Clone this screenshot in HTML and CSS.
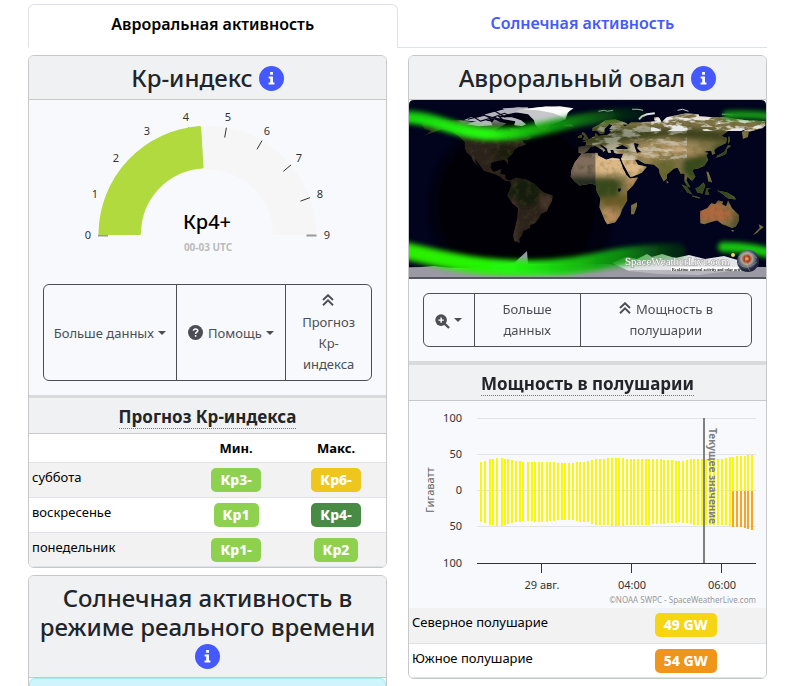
FILE: index.html
```html
<!DOCTYPE html>
<html lang="ru">
<head>
<meta charset="utf-8">
<meta name="viewport" content="width=device-width, initial-scale=1">
<title>SpaceWeatherLive</title>
<link rel="stylesheet" href="styles.css">
</head>
<body>
<svg class="defs" aria-hidden="true">
  <symbol id="info" viewBox="0 0 512 512"><circle cx="256" cy="256" r="256" fill="#4459ff"/><path fill="#fff" d="M228 124h58v54h-58zM198 216h88v124h30v40H196v-40h34v-84h-32z"/></symbol>
  <symbol id="up" viewBox="0 0 12 12"><path d="M1 6 6 1.2 11 6M1 11.2 6 6.4 11 11.2" fill="none" stroke="currentColor" stroke-width="1.9"/></symbol>
</svg>
<main class="page">
  <nav class="tabs">
    <a class="tab active" href="#aurora">Авроральная активность</a>
    <a class="tab" href="#solar">Солнечная активность</a>
  </nav>
  <div class="columns">
    <div class="column">
      <section class="card">
        <h2 class="card-title">Кр-индекс <svg class="info"><use href="#info"/></svg></h2>
        <svg class="gauge" viewBox="0 0 357 170">
          <path fill="#f6f6f6" d="M69.500 135a109 109 0 0 1 218 0h-43.500a65.500 65.500 0 0 0-131 0z"/>
          <g stroke="#333" stroke-width="1">
            <path d="M69 135.500h10M277.500 135.500h10" stroke="#999" stroke-width="2"/>
            <path d="M159.600 27.700l.6 4M197.400 27.700l-1.700 9.800M233 40.600l-5 8.700M262 64.900l-7.700 6.500M280.900 97.700l-9.400 3.400"/>
          </g>
          <path fill="#b0da3e" stroke="#b0da3e" stroke-width="3" stroke-linejoin="round" d="M71 133.500A107.500 107.500 0 0 1 170.700 27.500L173 67A67 67 0 0 0 110.500 133.500z"/>
          <g class="gauge-labels">
            <text x="59" y="139">0</text><text x="66" y="98">1</text><text x="87" y="62">2</text><text x="118" y="35">3</text><text x="157" y="21">4</text><text x="199" y="21">5</text><text x="238" y="35">6</text><text x="270" y="62">7</text><text x="291" y="98">8</text><text x="298" y="139">9</text>
          </g>
          <text class="gauge-value" x="178" y="129">Кр4+</text>
          <text class="gauge-time" x="179" y="151">00-03 UTC</text>
        </svg>
        <div class="actions left">
          <button class="btn tight">Больше данных<span class="caret"></span></button>
          <button class="btn tight"><svg class="icon help" viewBox="0 0 16 16"><circle cx="8" cy="8" r="8" fill="currentColor"/><path d="M5.800 6.200C6 3.500 10.400 3.700 10.400 6.200 10.400 7.800 8.100 7.600 8.100 9.500M8.100 10.700v1.700" fill="none" stroke="#fff" stroke-width="1.600"/></svg>Помощь<span class="caret"></span></button>
          <button class="btn"><svg class="icon up"><use href="#up"/></svg> Прогноз Кр-индекса</button>
        </div>
        <h3 class="sub-title"><abbr>Прогноз Кр-индекса</abbr></h3>
        <table class="table forecast">
          <thead><tr><th></th><th>Мин.</th><th>Макс.</th></tr></thead>
          <tbody>
            <tr><td>суббота</td><td><span class="badge light">Кр3-</span></td><td><span class="badge gold">Кр6-</span></td></tr>
            <tr><td>воскресенье</td><td><span class="badge light">Кр1</span></td><td><span class="badge dark">Кр4-</span></td></tr>
            <tr><td>понедельник</td><td><span class="badge light">Кр1-</span></td><td><span class="badge light">Кр2</span></td></tr>
          </tbody>
        </table>
      </section>
      <section class="card">
        <h2 class="card-title">Солнечная активность в режиме реального времени <svg class="info"><use href="#info"/></svg></h2>
        <div class="notice"></div>
      </section>
    </div>
    <div class="column">
      <section class="card">
        <h2 class="card-title">Авроральный овал <svg class="info"><use href="#info"/></svg></h2>
        <svg class="map" viewBox="0 0 357 179" preserveAspectRatio="none">
          <defs>
            <filter id="b1" x="-30%" y="-60%" width="160%" height="220%"><feGaussianBlur stdDeviation="1"/></filter>
            <filter id="b3" x="-30%" y="-60%" width="160%" height="220%"><feGaussianBlur stdDeviation="2.500"/></filter>
            <filter id="grain" x="0" y="0" width="100%" height="100%"><feTurbulence type="fractalNoise" baseFrequency=".16" numOctaves="4" seed="4"/><feColorMatrix values="0 0 0 0 .1  0 0 0 0 .1  0 0 0 0 .02  2.200 0 0 0 -1.050"/></filter>
            <filter id="snow" x="0" y="0" width="100%" height="100%"><feTurbulence type="fractalNoise" baseFrequency=".06 .16" numOctaves="4" seed="8"/><feColorMatrix values="0 0 0 0 .88  0 0 0 0 .88  0 0 0 0 .88  6 0 0 0 -2.700"/></filter>
            <linearGradient id="north" x1="0" x2="1"><stop offset="0" stop-color="#13d80a"/><stop offset=".4" stop-color="#24ff08"/><stop offset=".65" stop-color="#13a510"/><stop offset="1" stop-color="#0a5a0a" stop-opacity=".3"/></linearGradient>
            <linearGradient id="south" x1="0" x2="1"><stop offset="0" stop-color="#2df000"/><stop offset=".5" stop-color="#20f808"/><stop offset=".8" stop-color="#14b812"/><stop offset="1" stop-color="#0a700a" stop-opacity=".4"/></linearGradient>
            <radialGradient id="ball" cx=".45" cy=".4"><stop offset="0" stop-color="#e8d060"/><stop offset=".25" stop-color="#a83020"/><stop offset=".5" stop-color="#b0a890"/><stop offset=".8" stop-color="#4c5578"/><stop offset="1" stop-color="#20243c"/></radialGradient>
            <path id="america" d="M-168-66-162-70-156-71-141-70-128-70-115-68-108-68-96-68-94-71-88-68-82-67-87-64-94-60-92-57-82-55-80-51-78-54-77-58-78-62-70-61-65-58-60-55-56-52-60-50-66-50-64-47-61-46-66-44-70-43-74-40-76-36-81-31-80-25-82-28-84-30-90-29-97-27-98-22-95-18-91-19-87-21-88-16-83-15-83-11-79-9-76-10-72-12-68-11-62-10-54-6-50-2-44 3-35 6-36 12-39 17-41 22-47 25-49 29-53 34-58 36-58 39-65 42-66 46-69 50-68 54-74 52-75 46-73 38-71 30-70 19-76 14-81 6-79 1-77-4-78-8-84-9-88-13-95-16-105-19-109-25-114-31-113-28-110-23-115-28-118-34-122-37-124-42-124-48-130-54-138-59-147-61-152-59-158-57-165-54-158-59-165-61-166-64z"/>
            <path id="eurasia" d="M-9-37-9-43-2-44-1-48-5-48 2-51 8-54 8-57 11-54 20-55 24-58 22-60 28-60 22-61 25-65 22-66 17-61 17-57 13-56 10-59 5-59 5-62 12-66 18-70 28-71 40-67 41-65 35-66 38-64 44-68 54-68 68-69 67-73 72-73 75-68 80-73 100-77 112-76 113-74 128-73 140-73 160-70 180-69 180-65 177-62 170-60 163-58 162-53 157-51 156-58 163-62 155-59 142-59 135-54 141-52 140-47 132-43 128-40 129-36 126-35 125-39 121-39 118-38 122-37 120-34 122-30 118-24 111-21 108-21 106-19 109-13 106-9 105-9 101-13 100-9 104-2 101-3 98-8 98-16 94-16 91-22 87-21 80-15 80-11 77-8 73-16 72-21 67-25 58-26 56-27 51-30 48-30 51-25 56-24 60-23 55-17 45-13 43-13 39-20 35-28 34-31 36-36 30-36 27-37 26-40 23-40 24-37 21-37 19-42 13-46 13-44 18-40 16-38 15-40 8-44 3-43 0-39-5-36z"/>
            <path id="africa" d="M-6-36 10-37 11-34 19-30 25-32 32-31 36-22 39-15 43-11 51-12 46-4 40 2 40 11 35 20 33 26 28 33 20 35 18 32 12 18 13 9 9 1 9-4 4-6-8-4-13-8-17-13-16-20-13-27z"/>
            <path id="australia" d="M114 22 114 34 118 35 124 33 131 31 136 35 139 36 146 39 150 37 153 31 153 26 146 19 142 11 140 17 136 15 137 12 132 11 129 15 125 14 121 19z"/>
            <path id="islands" d="M44 25 44 16 50 13 50 17 47 25zM-5-50 1-51-2-56-5-58-6-56-3-54zM-10-52-6-52-6-55-9-54zM-24-64-14-64-16-66-23-66zM130-32 136-34 140-36 141-41 145-44 142-45 138-38 131-34zM142-46 144-49 143-54 142-52zM95-5 100-3 106 5 101 3zM106 6 114 8 113 9 106 7zM109-1 113-3 117-7 119-4 116 4 111 3zM119 5 120-1 125-1 121 0 123 5zM131 1 141 3 148 7 150 10 142 9 137 5zM120-18 122-18 124-13 126-7 122-8 121-14zM173 35 178 38 174 41 171 44 167 46 172 41 174 39zM145 41 148 41 147 43zM80-9 82-7 80-6z"/>
            <clipPath id="land"><use href="#eurasia"/><use href="#africa"/><use href="#australia"/><use href="#islands"/></clipPath>
            <clipPath id="west"><use href="#america"/></clipPath>
            <clipPath id="frame"><path d="M0 179V5Q0 0 5 0H352Q357 0 357 5V179z"/></clipPath>
          </defs>
          <g clip-path="url(#frame)">
            <path fill="#02031d" d="M0 0h357v179H0z"/>
            <ellipse cx="112" cy="108" rx="92" ry="96" fill="#000" opacity=".45" filter="url(#b3)"/>
            <ellipse cx="108" cy="106" rx="78" ry="84" fill="#000" opacity=".6"/>
            <g transform="translate(178.500 89.500) scale(.99)">
              <g clip-path="url(#west)">
                <path fill="#2b221c" d="M-180-90H-30V60H-180z"/>
                <g filter="url(#b3)"><ellipse cx="-62" cy="3" rx="17" ry="14" fill="#131a0b"/><ellipse cx="-82" cy="-36" rx="12" ry="9" fill="#1c1c10"/><ellipse cx="-115" cy="-59" rx="45" ry="7" fill="#2f4520"/><path fill="#8d8d94" d="M-130-90h80v23h-80z"/><path fill="#44332a" d="M-78 10h6v44h-6zM-48 6h12v14h-12z"/></g>
                <path filter="url(#grain)" opacity=".4" d="M-180-90H-30V60H-180z"/>
              </g>
              <path fill="#b4b4be" d="M-125-70-118-73-110-73-103-76-92-79-84-81-70-83-60-82-66-79-76-77-84-75-91-74-88-72-96-72-104-69-115-69zM-88-73-76-73-67-70-62-66-66-64-74-65-73-69-85-71z"/>
              <path fill="#b4b4be" d="M-122-66-110-70-98-69-96-65-110-64zM-86-82-60-83-62-79-80-78z"/>
              <path fill="#c8c8cc" d="M-73-78-68-81-55-82-42-84-27-83-17-81-20-77-22-71-29-68-38-65-43-60-49-61-53-66-54-70-60-76z"/>
              <path fill="#fbfbfb" d="M-66-81-50-83-28-84-14-82-20-78-23-72-34-77-50-80z"/>
              <path fill="none" stroke="#04051c" stroke-width="1.200" d="M-118-75-108-69-94-73-86-69M-110-78-98-72-84-77-74-73M-95-80-83-73M-121-71-104-75-90-71"/>
              <g clip-path="url(#land)">
                <path fill="#7d7145" d="M-30-90H180V60H-30z"/>
                <g filter="url(#b3)">
                  <path fill="#3c431e" d="M-15-57 10-64 50-61 100-62 150-58 150-47 100-52 80-54 40-49 20-45-15-43z"/>
                  <path fill="#a58c5c" d="M45-46 80-49 110-46 118-38 104-34 80-33 62-28 45-33z"/>
                  <path fill="#dcb887" d="M-20-36 35-36 45-31 60-24 50-12 34-15-20-15z"/>
                  <path fill="#37491c" d="M-20-11 25-11 34-7 31 7 10 9-8-3zM98-31 125-36 120-22 106-8 96-19z"/>
                  <path fill="#68672f" d="M69-30 90-27 82-8 74-10z"/>
                  <path fill="#6b5b28" d="M10 9 42 5 38 20 23 20z"/>
                  <path fill="#b58a5c" d="M12 20 32 18 30 36 15 36zM38-12 52-13 43 4z"/>
                  <path fill="#31441b" d="M93-8 130-8 155 12 125 11 95 8zM128-45 147-45 146-29 130-30z"/>
                  <path fill="#ad6841" d="M110 18 125 13 140 17 149 26 138 33 110 31z"/>
                  <path fill="#56512e" d="M151 20h6v20h-15z"/>
                </g>
                <path fill="#c6a880" filter="url(#b1)" d="M76-41 90-44 102-41 94-38 80-38z"/>
                <path filter="url(#grain)" opacity=".45" d="M-30-90H180V60H-30z"/>
                <path filter="url(#snow)" opacity=".9" d="M65-80H180V-60H78z"/>
                <path filter="url(#snow)" opacity=".45" d="M5-72H65V-65H5zM77-36H100V-30H77z"/>
                <path fill="#030420" opacity=".42" d="M-30-45H8V30H-30z"/>
              </g>
              <path fill="#03051d" d="M28-42 35-45 41-42 40-41 30-41zM47-47 52-46 50-42 54-38 50-37 48-42zM31-1 34-1 33 2 31 2zM34-28 38-22 43-13 42-12 36-21z"/>
              <path fill="none" stroke="#c8cbd0" stroke-width="1" d="M11-79 17-80 20-79 26-80M45-81 51-81 56-80M91-80 96-81 102-79M136-76 141-76 147-75"/>
              <path fill="none" stroke="#e4e4e6" stroke-width="2" d="M52-71 55-74 60-76 68-77"/>
              <path fill="#d8d8df" d="M-180 79H180V90H-180z"/>
            </g>
            <path fill="#9a98a3" d="M0 168 25 166 50 169 105 163 118 151 119 164 200 164 240 168 300 166 357 167V179H0z"/>
            <path fill="#e4e4e9" d="M203 163 217 157 228 159 238 154 243 157 253 154 266 158 280 155 296 159 315 156 332 161 329 170 290 175 250 174 220 171z"/>
            <g fill="none" stroke-linecap="round" filter="url(#b3)">
              <path stroke="url(#north)" stroke-width="13" opacity=".8" d="M-8 17C28 16 45 34 85 34 130 35 150 18 230 14"/>
              <path stroke="url(#north)" stroke-width="9" d="M-8 18C28 20 45 33 85 35 125 36 145 20 205 15"/>
              <path stroke="#159a12" stroke-width="8" d="M318 15Q345 14 365 17"/>
              <path stroke="url(#south)" stroke-width="18" opacity=".8" d="M-12 149C30 158 60 169 125 169 180 168 200 154 268 152"/>
              <path stroke="url(#south)" stroke-width="12" d="M-12 149C30 158 60 166 110 167 160 168 190 164 218 157"/>
              <path stroke="#17c80b" stroke-width="10" d="M314 147Q345 147 370 156"/>
            </g>
            <path fill="#9b9aa5" opacity=".6" d="M0 167 20 167 40 175 160 175 225 170 357 170V177H0z"/>
            <path fill="#575761" d="M0 177h357v2H0z"/>
            <text class="brand" x="216" y="165">SpaceWeatherLive.com</text>
            <path fill="#fff" d="M262 167h71v4h-71z"/>
            <text class="tagline" x="263" y="171">Real-time auroral activity and solar activity</text>
            <circle cx="324" cy="155" r="2" fill="#f4d85a"/>
            <circle cx="339" cy="161" r="11" fill="url(#ball)"/>
            <path d="M329 163q8 9 19-1M330 157q9-8 18 1M339 151q-6 9 2 20" fill="none" stroke="#c8b878" opacity=".4"/>
          </g>
        </svg>
        <div class="actions right">
          <button class="btn" aria-label="Увеличить"><svg class="icon zoom" viewBox="0 0 16 16"><circle cx="6.500" cy="6.500" r="6.200" fill="currentColor"/><path d="m10.500 10.500 4.500 4.500" stroke="currentColor" stroke-width="2.400"/><path d="M3.600 6.500h5.800M6.500 3.600v5.800" stroke="#fff" stroke-width="1.500"/></svg><span class="caret"></span></button>
          <button class="btn">Больше данных</button>
          <button class="btn roomy"><svg class="icon up"><use href="#up"/></svg> Мощность в полушарии</button>
        </div>
        <h3 class="sub-title thick"><abbr>Мощность в полушарии</abbr></h3>
        <svg class="chart" viewBox="0 0 357 206">
          <path d="M68 16.500h279M68 52.500h279M68 88.500h279M68 124.500h279" stroke="#e2e3e6"/>
          <g id="bars"></g>
          <path d="M68 161.500h279M132.500 162v9M222.500 162v9M312.500 162v9" stroke="#333"/>
          <path d="M295 16v145" stroke="#808080" stroke-width="2"/>
          <g class="axis-y"><text x="53" y="20">100</text><text x="53" y="56">50</text><text x="53" y="92">0</text><text x="53" y="128">50</text><text x="53" y="165">100</text></g>
          <g class="axis-x"><text x="133" y="187">29 авг.</text><text x="223" y="187">04:00</text><text x="313" y="187">06:00</text></g>
          <text class="axis-name" transform="translate(25 88) rotate(-90)">Гигаватт</text>
          <text class="now" transform="translate(300 26) rotate(90)">Текущее значение</text>
          <text class="credit" x="347" y="201">©NOAA SWPC - SpaceWeatherLive.com</text>
        </svg>
        <table class="table power-table">
          <tbody>
            <tr><td>Северное полушарие</td><td><span class="badge yellow">49 GW</span></td></tr>
            <tr><td>Южное полушарие</td><td><span class="badge orange">54 GW</span></td></tr>
          </tbody>
        </table>
      </section>
      <section class="card next"></section>
    </div>
  </div>
</main>
<script src="chart.js"></script>
</body>
</html>
```
FILE: styles.css
```css
* { box-sizing: border-box; }
html { overflow: hidden; }
body { margin: 0; background: #fff; color: #212529; font: 14px/21px "Noto Sans", "Open Sans", sans-serif; }
.defs { position: absolute; width: 0; height: 0; }
.page { padding: 4px 19px 0 28px; height: 100vh; overflow: hidden; }
.tabs { display: grid; grid-template-columns: 1fr 1fr; }
.tab { height: 44px; padding: 9px 10px; border-bottom: 1px solid #dee2e6; color: #4459ff; font-size: 16px; font-weight: 600; text-align: center; text-decoration: none; }
.tab.active { color: #000; border: 1px solid #dee2e6; border-bottom-color: #fff; border-radius: 6px 6px 0 0; }
.columns { display: grid; grid-template-columns: 1fr 1fr; gap: 21px; margin-top: 7px; }
.card { border: 1px solid #c6c8ca; border-radius: 6px; background: #f8f9fc; overflow: hidden; margin-bottom: 7px; }
.card-title { margin: 0; padding: 7px; background: #f0f1f3; border-bottom: 1px solid #c6c8ca; font-size: 24px; line-height: 29px; font-weight: 500; text-align: center; }
.info { width: 25px; height: 25px; margin: -4px 0 -2px 0; vertical-align: -2px; }
.gauge, .map, .chart { display: block; width: 100%; }
.chart { margin-top: 1px; }
.gauge-labels { font-size: 11px; fill: #333; text-anchor: middle; }
.gauge-value { font-size: 20px; font-weight: 500; fill: #000; text-anchor: middle; }
.gauge-time { font-size: 10px; font-weight: 700; fill: #bbb; text-anchor: middle; }
.actions { display: grid; margin: 14px; border: 1px solid #4b4f55; border-radius: 6px; }
.actions.left { grid-template-columns: 133fr 110fr 85fr; }
.actions.right { grid-template-columns: 51fr 106fr 171fr; }
.btn { min-width: 0; border: 0; border-right: 1px solid #4b4f55; background: none; color: #4b4f55; font: inherit; font-size: 13px; line-height: 21px; padding: 5px 10px; text-align: center; }
.btn:last-child { border-right: 0; }
.left .btn { padding-top: 6px; }
.btn.tight { padding-left: 4px; padding-right: 4px; white-space: nowrap; }
.btn.roomy { padding-left: 20px; padding-right: 20px; }
.icon { width: 12px; height: 12px; }
.help { width: 15px; height: 15px; margin-right: 5px; vertical-align: -2px; }
.zoom { width: 15px; height: 15px; vertical-align: -4px; }
.up { margin-right: 2px; }
.caret { display: inline-block; margin-left: 4px; vertical-align: 3px; border: 4px solid transparent; border-top-color: currentColor; border-bottom: 0; }
.sub-title { margin: 0; padding: 8px 10px 6px; border-top: 3px solid #d9dadc; border-bottom: 1px solid #c6c8ca; background: #f0f1f3; font-size: 17px; line-height: 21px; font-weight: 700; text-align: center; }
.sub-title.thick { border-top-width: 4px; }
.sub-title abbr { border-bottom: 1px dotted #777; }
.table { width: 100%; border-collapse: collapse; background: #fff; color: #000; font-size: 13px; line-height: 21px; table-layout: fixed; }
.table th { padding: 4px 3px 3px; font-weight: 700; }
.table td { height: 35px; padding: 4px 3px; border-bottom: 1px solid #dee2e6; vertical-align: top; text-align: center; }
.table tr:last-child td { height: 34px; padding-bottom: 2px; }
.table td:first-child { text-align: left; }
.table tbody tr:nth-child(odd) { background: #f2f2f2; }
.table thead tr { border-bottom: 1px solid #dee2e6; }
.forecast th:first-child { width: 44%; }
.power-table td:first-child { width: 55%; }
.badge { display: inline-block; margin-top: 1px; padding: 2px 9px; border-radius: 5px; color: #fff; font-size: 14px; line-height: 20px; font-weight: 800; }
.light { background: #8ed14f; }
.gold { background: #efc61e; }
.dark { background: #488b45; }
.yellow { background: #f6d514; }
.orange { background: #ef951b; }
.notice { height: 60px; border: 1px solid #a6e9f5; border-radius: 6px; background: #cff4fc; }
.brand { font: 11px "Liberation Serif", serif; fill: #fff; stroke: #999; stroke-width: 1px; paint-order: stroke; }
.tagline { font: 700 4px "Liberation Serif", serif; fill: #111; }
.axis-y { font-size: 11px; fill: #333; text-anchor: end; }
.axis-x { font-size: 11px; fill: #333; text-anchor: middle; }
.axis-name { font-size: 11px; fill: #666; text-anchor: middle; }
.now { font-size: 10px; font-weight: 700; fill: #808080; }
.credit { font-size: 8px; fill: #999; text-anchor: end; }
.next { height: 40px; }
```
FILE: chart.js
```js
// Hemispheric power samples: x position, top and bottom in chart units.
var xs = [71,75,80,83,87,92,95,98,102,106,110,113,118,122,125,129,132,137,140,144,148,152,155,159,163,167,170,174,178,182,186,190,194,198,202,206,209,213,217,221,224,228,232,236,239,243,247,251,254,258,262,266,269,273,277,281,284,288,292,296,300,304,308,312,316,320,323,327,331,335,338,342];
var tops = [60,59,57,57,56,56,57,57,58,59,59,60,60,60,60,60,60,60,60,60,61,61,61,61,61,60,60,60,59,58,57,57,57,56,56,56,56,56,57,57,57,57,57,57,57,57,57,57,58,58,58,59,59,59,58,57,57,57,57,57,57,57,57,57,56,55,55,54,54,54,53,53];
var bottoms = [120,121,123,123,124,124,123,122,121,120,120,119,119,119,120,120,120,120,119,119,118,118,118,118,118,119,120,120,120,122,123,123,123,123,124,124,124,124,123,123,123,123,123,123,123,122,122,122,122,121,121,121,120,121,121,122,123,123,123,123,123,123,123,123,123,124,125,125,125,126,127,128];
var bars = document.getElementById("bars");
function bar(x, y1, y2, color) {
  var r = document.createElementNS("http://www.w3.org/2000/svg", "rect");
  r.setAttribute("x", x);
  r.setAttribute("y", y1);
  r.setAttribute("width", 2);
  r.setAttribute("height", y2 - y1);
  r.setAttribute("fill", color);
  bars.appendChild(r);
}
xs.forEach(function (x, i) {
  bar(x, tops[i], 89, "#fbf70c");
  bar(x, 89, bottoms[i], x > 321 ? "#ffa31c" : "#fbf70c");
});
```
